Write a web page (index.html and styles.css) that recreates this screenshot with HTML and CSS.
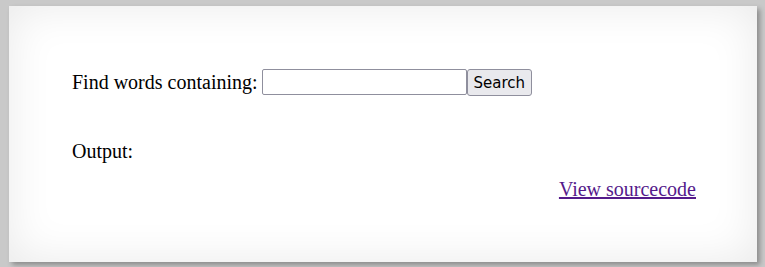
FILE: index.html
```html
<!DOCTYPE html>
<html>
<head>
<meta charset="utf-8">
<link rel="stylesheet" href="styles.css">
</head>
<body>
<div class="box">
  <form class="search-row" onsubmit="return false;">
    <label class="label" for="q">Find words containing:</label>
    <input class="field" id="q" type="text">
    <button class="btn" type="submit">Search</button>
  </form>
  <div class="output">Output:</div>
  <div class="links"><a class="source" href="#">View sourcecode</a></div>
</div>
</body>
</html>
```

FILE: styles.css
```css
html, body {
  margin: 0;
  padding: 0;
}
body {
  background: #c9c9c9;
  font-family: "Liberation Serif", "Times New Roman", serif;
  font-size: 20px;
  color: #000;
  padding: 6px 8px 0 9px;
  height: 267px;
  box-sizing: border-box;
  overflow: hidden;
}
.box {
  background: #fff;
  box-shadow: inset 0 0 45px rgba(0, 0, 0, 0.09), 3px 3px 5px rgba(0, 0, 0, 0.3);
  height: 256px;
  box-sizing: border-box;
  padding: 63px 61px 0 63px;
}
.search-row {
  display: flex;
  align-items: center;
  margin: 0;
  height: 26px;
}
.label {
  margin-right: 4px;
  line-height: 23px;
}
.field {
  width: 205px;
  height: 26px;
  box-sizing: border-box;
  border: 1px solid #8f8f9d;
  border-radius: 2px;
  margin: 0;
  padding: 1px 2px;
  font-size: 16px;
  background: #fff;
}
.btn {
  height: 27px;
  box-sizing: border-box;
  margin: 0;
  padding: 2px 6px 0;
  border: 1px solid #8f8f9d;
  border-radius: 3px;
  background: #e9e9ed;
  font-family: "DejaVu Sans", Verdana, sans-serif;
  font-size: 15px;
  color: #000;
}
.output {
  margin-top: 45px;
  line-height: 23px;
}
.links {
  margin-top: 15px;
  text-align: right;
  line-height: 23px;
}
.source {
  color: #551a8b;
}
```
